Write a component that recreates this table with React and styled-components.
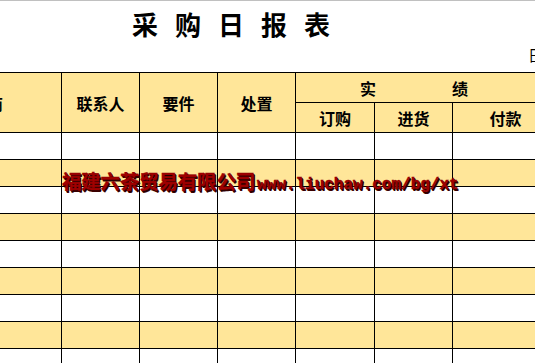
import React from 'react';
import styled, { createGlobalStyle } from 'styled-components';

const GlobalStyle = createGlobalStyle`
  html, body {
    margin: 0;
    padding: 0;
    background: #ffffff;
    overflow: hidden;
  }
  body {
    font-family: "Noto Sans CJK SC", "Liberation Serif", serif;
    color: #000;
  }
`;

const YELLOW = '#ffe699';

const Sheet = styled.div`
  position: relative;
  width: 535px;
  height: 363px;
  overflow: hidden;
  border-top: 1px solid #c0c0c0;
  box-sizing: border-box;
`;

const TitleBar = styled.div`
  height: 46px;
  display: flex;
  align-items: center;
  justify-content: flex-start;
  padding-left: 132px;
  font-size: 26px;
  font-weight: 700;
  letter-spacing: 17px;
  line-height: 1;
`;

const DateLine = styled.div`
  height: 25px;
  display: flex;
  align-items: flex-start;
  padding-left: 528px;
  font-size: 15px;
  line-height: 1;
  white-space: nowrap;
`;

const Grid = styled.div`
  display: grid;
  width: 554px;
  grid-template-columns: 62px 78px 78px 78px 79px 78px 101px;
  grid-template-rows: 30px 30px;
  grid-auto-rows: 27px;
  border-top: 1px solid #000;
`;

const Cell = styled.div`
  box-sizing: border-box;
  border-right: 1px solid #000;
  border-bottom: 1px solid #000;
  background: ${p => (p.$yellow ? YELLOW : '#fff')};
  display: flex;
  align-items: center;
  justify-content: ${p => p.$align || 'center'};
  overflow: hidden;
  white-space: nowrap;
  font-weight: 700;
  font-size: ${p => p.$size || 16}px;
  line-height: 1;
  grid-row: ${p => p.$row || 'auto'};
  grid-column: ${p => p.$col || 'auto'};
`;

const FirstHead = styled(Cell)`
  justify-content: flex-end;
  padding-right: 58px;
`;

const Merged = styled(Cell)`
  justify-content: flex-start;
  padding-left: 64px;
  gap: 76px;
`;

const LastSub = styled(Cell)`
  border-right: none;
  padding-left: 4px;
`;

const Watermark = styled.div`
  position: absolute;
  left: 62px;
  top: 170px;
  display: flex;
  align-items: baseline;
  white-space: nowrap;
  color: #a00000;
  font-weight: 700;
  -webkit-text-stroke: 0.4px #8a0000;
  text-shadow: 1px 1px 0 #200000, 1.5px 1.5px 0 #3a0000;
  line-height: 1;
`;

const WaterCn = styled.span`
  font-family: "Noto Sans CJK SC", sans-serif;
  font-size: 19.5px;
  letter-spacing: -0.2px;
`;

const WaterUrl = styled.span`
  font-family: "Liberation Mono", monospace;
  font-size: 16px;
  margin-left: 2px;
`;

const bodyRows = Array.from({ length: 9 }, (_, i) => i % 2 === 1);

export default function App() {
  return (
    <>
      <GlobalStyle />
      <Sheet>
        <TitleBar>采购日报表</TitleBar>
        <DateLine>日期：</DateLine>
        <Grid>
          <FirstHead $yellow $row="1 / span 2">厂商</FirstHead>
          <Cell $yellow $row="1 / span 2">联系人</Cell>
          <Cell $yellow $row="1 / span 2">要件</Cell>
          <Cell $yellow $row="1 / span 2">处置</Cell>
          <Merged $yellow $col="5 / span 3">
            <span>实</span>
            <span>绩</span>
          </Merged>
          <Cell $yellow>订购</Cell>
          <Cell $yellow>进货</Cell>
          <LastSub $yellow>付款</LastSub>
          {bodyRows.map((yellow, r) =>
            Array.from({ length: 7 }, (_, c) => (
              <Cell key={`${r}-${c}`} $yellow={yellow} />
            ))
          )}
        </Grid>
        <Watermark>
          <WaterCn>福建六茶贸易有限公司</WaterCn>
          <WaterUrl>www.liuchaw.com/bg/xt</WaterUrl>
        </Watermark>
      </Sheet>
    </>
  );
}
